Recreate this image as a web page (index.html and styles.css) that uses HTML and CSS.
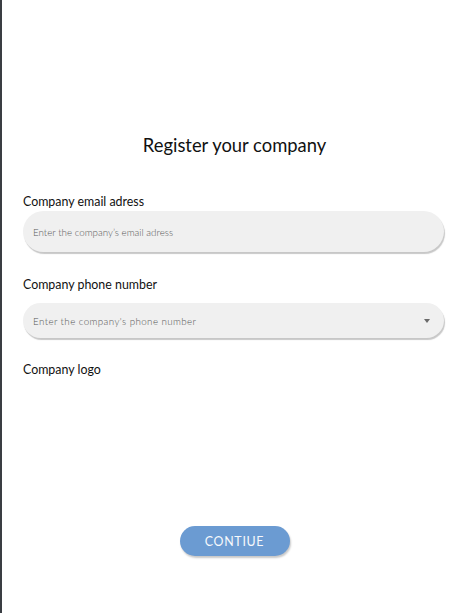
FILE: index.html
```html
<!DOCTYPE html>
<html>
<head>
<meta charset="utf-8">
<link rel="stylesheet" href="styles.css">
</head>
<body>
<main class="page">
  <h1 class="title">Register your company</h1>
  <label class="label label-email">Company email adress</label>
  <div class="field field-email">
    <span class="placeholder">Enter the company’s email adress</span>
  </div>
  <label class="label label-phone">Company phone number</label>
  <div class="field field-phone">
    <span class="placeholder placeholder-phone">Enter the company's phone number</span>
    <span class="caret"></span>
  </div>
  <label class="label label-logo">Company logo</label>
  <div class="actions">
    <button class="btn">CONTIUE</button>
  </div>
</main>
</body>
</html>
```
FILE: styles.css
```css
html, body {
  margin: 0;
  padding: 0;
  background: #ffffff;
}
body {
  min-height: 100vh;
  box-sizing: border-box;
  border-left: 2px solid #3a3e43;
  font-family: Lato, "Liberation Sans", sans-serif;
  color: #111;
}
.page {
  display: flex;
  flex-direction: column;
  width: 421px;
  padding-left: 21px;
}
.title {
  margin: 0;
  padding-top: 133px;
  padding-left: 2px;
  font-size: 18.4px;
  line-height: 24px;
  font-weight: 400;
  text-align: center;
  color: #111;
}
.label {
  display: block;
  font-size: 12.4px;
  line-height: 16px;
  color: #111;
}
.label-email { margin-top: 37px; }
.label-phone { margin-top: 25px; }
.label-logo { margin-top: 24px; }
.field {
  display: flex;
  align-items: center;
  background: #f0f0f0;
  border-radius: 22px;
  box-shadow: 1px 2px 1px rgba(0, 0, 0, 0.22);
  padding: 0 12px 0 10px;
}
.field-email {
  margin-top: 1px;
  height: 41px;
}
.field-phone {
  margin-top: 10px;
  height: 35px;
  border-radius: 18px;
}
.placeholder {
  flex: 1;
  font-size: 9.8px;
  font-weight: 300;
  color: #5a5a5a;
}
.placeholder-phone {
  font-weight: 300;
  font-size: 9.8px;
  letter-spacing: 0.4px;
  color: #555;
}
.caret {
  width: 0;
  height: 0;
  border-left: 3.5px solid transparent;
  border-right: 3.5px solid transparent;
  border-top: 4px solid #6a6a6a;
  margin-right: 2px;
}
.actions {
  display: flex;
  justify-content: center;
  margin-top: 148px;
  padding-left: 2px;
}
.btn {
  width: 110px;
  height: 30px;
  border: none;
  border-radius: 15px;
  background: #6b9bd2;
  color: #f7f9fc;
  font-family: Lato, "Liberation Sans", sans-serif;
  font-size: 12.4px;
  letter-spacing: 0.7px;
  box-shadow: 1px 2px 2px rgba(0, 0, 0, 0.22);
  padding: 0;
}
```
